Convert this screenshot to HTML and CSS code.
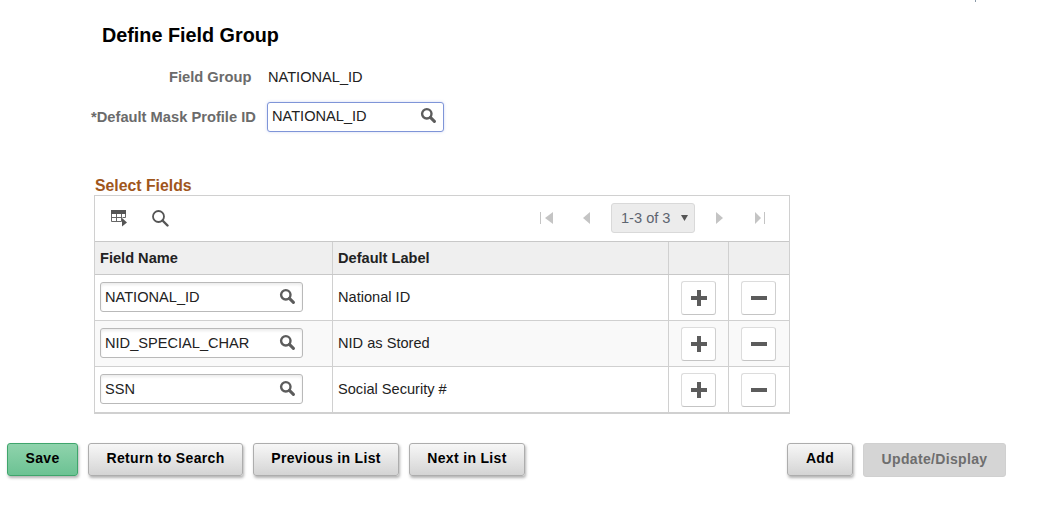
FILE: index.html
```html
<!DOCTYPE html>
<html lang="en">
<head>
<meta charset="utf-8">
<title>Define Field Group</title>
<link rel="stylesheet" href="styles.css">
</head>
<body>
<svg class="defs" width="0" height="0" aria-hidden="true">
  <symbol id="prompt" viewBox="0 0 16 16"><circle cx="6.8" cy="6.8" r="4.7" fill="none" stroke="currentColor" stroke-width="2.4"/><path d="M10.4 10.4 14.4 14.4" stroke="currentColor" stroke-width="3" stroke-linecap="round"/></symbol>
  <symbol id="plus" viewBox="0 0 16 16"><path d="M6 0h4v6h6v4h-6v6H6v-6H0V6h6z" fill="currentColor"/></symbol>
</svg>
<div class="tick"></div>
<main class="page">
  <h1 class="title">Define Field Group</h1>
  <div class="form-row row-static">
    <span class="label label-static">Field Group</span>
    <span class="value">NATIONAL_ID</span>
  </div>
  <div class="form-row row-input">
    <span class="label">*Default Mask Profile ID</span>
    <div class="field field-focus"><span>NATIONAL_ID</span><svg class="prompt"><use href="#prompt"/></svg></div>
  </div>
  <div class="grid-title">Select Fields</div>
  <section class="grid">
    <div class="toolbar">
      <svg class="tool-view" width="18" height="18" viewBox="0 0 18 18"><path d="M1 1h15v4H1z" fill="#555"/><path d="M1.500 5v7.500h10M1.500 8.500h10M6.500 5v7.500M11.500 5v7.500M15.500 5v3.500" fill="none" stroke="#666" stroke-width="1"/><path d="M12.500 8.500h3" stroke="#666" stroke-width="1"/><path d="M12 9l5 4.500-5 4z" fill="#555"/></svg>
      <svg class="tool-find" width="18" height="18" viewBox="0 0 18 18"><circle cx="7.500" cy="7.500" r="5.500" fill="none" stroke="#555" stroke-width="1.800"/><path d="M11.500 11.500 16.500 16.500" stroke="#555" stroke-width="2.400" stroke-linecap="round"/></svg>
      <div class="pager">
        <svg width="13" height="14" viewBox="0 0 13 14"><path d="M.5 1v12" stroke="#c4c4c4"/><path d="M13 1v12L5 7z" fill="#c4c4c4"/></svg>
        <svg class="pg-prev" width="8" height="14" viewBox="0 0 8 14"><path d="M7 1v12L0 7z" fill="#c4c4c4"/></svg>
        <div class="pager-select"><span>1-3 of 3</span><svg width="7" height="6" viewBox="0 0 7 6"><path d="M0 0h7L3.500 6z" fill="#555"/></svg></div>
        <svg class="pg-next" width="8" height="14" viewBox="0 0 8 14"><path d="M0 1v12l7-6z" fill="#c4c4c4"/></svg>
        <svg class="pg-last" width="12" height="14" viewBox="0 0 12 14"><path d="M0 1v12l6-6z" fill="#c4c4c4"/><path d="M9.500 1v12" stroke="#c4c4c4"/></svg>
      </div>
    </div>
    <div class="row head">
      <div class="cell c1">Field Name</div>
      <div class="cell c2">Default Label</div>
      <div class="cell c3"></div>
      <div class="cell c4"></div>
    </div>
    <div class="row first">
      <div class="cell c1"><div class="field field-row"><span>NATIONAL_ID</span><svg class="prompt"><use href="#prompt"/></svg></div></div>
      <div class="cell c2">National ID</div>
      <div class="cell c3"><div class="icon-btn"><svg width="16" height="16"><use href="#plus"/></svg></div></div>
      <div class="cell c4"><div class="icon-btn"><span class="minus"></span></div></div>
    </div>
    <div class="row alt">
      <div class="cell c1"><div class="field field-row"><span>NID_SPECIAL_CHAR</span><svg class="prompt"><use href="#prompt"/></svg></div></div>
      <div class="cell c2">NID as Stored</div>
      <div class="cell c3"><div class="icon-btn"><svg width="16" height="16"><use href="#plus"/></svg></div></div>
      <div class="cell c4"><div class="icon-btn"><span class="minus"></span></div></div>
    </div>
    <div class="row last">
      <div class="cell c1"><div class="field field-row"><span>SSN</span><svg class="prompt"><use href="#prompt"/></svg></div></div>
      <div class="cell c2">Social Security #</div>
      <div class="cell c3"><div class="icon-btn"><svg width="16" height="16"><use href="#plus"/></svg></div></div>
      <div class="cell c4"><div class="icon-btn"><span class="minus"></span></div></div>
    </div>
  </section>
  <footer class="actions">
    <div class="btn btn-save">Save</div>
    <div class="btn btn-return">Return to Search</div>
    <div class="btn btn-prev">Previous in List</div>
    <div class="btn btn-next">Next in List</div>
    <div class="spacer"></div>
    <div class="btn btn-add">Add</div>
    <div class="btn btn-update">Update/Display</div>
  </footer>
</main>
</body>
</html>
```
FILE: styles.css
```css
* { box-sizing: border-box; }
html, body { margin: 0; padding: 0; background: #fff; }
body { width: 1058px; height: 530px; overflow: hidden; position: relative; font-family: "Liberation Sans", Arial, sans-serif; font-size: 14.6px; color: #222; }
.defs { position: absolute; }
.tick { position: absolute; left: 975px; top: 0; width: 1px; height: 2px; background: #8a9aa8; }
.page { padding-top: 24px; }
.title { margin: 0 0 0 102px; font-size: 19.8px; line-height: 22px; font-weight: bold; color: #000; }
.form-row { display: flex; align-items: center; }
.row-static { margin-top: 21px; height: 20px; padding-left: 169px; }
.row-input { margin-top: 15px; height: 30px; padding-left: 91px; }
.label { font-size: 14.7px; font-weight: bold; color: #6b6b6b; white-space: nowrap; }
.label-static { width: 99px; }
.row-input .label { width: 176px; }
.value { color: #222; }
.field { display: flex; align-items: center; justify-content: space-between; height: 30px; background: #fff; border: 1px solid #b9b9b9; border-radius: 3px; box-shadow: inset 0 2px 3px rgba(0,0,0,.08); padding: 0 7px 0 4px; color: #222; }
.field-focus { width: 177px; padding-bottom: 2px; border-color: #7f95d8; box-shadow: 0 0 3px rgba(120,140,220,.35); }
.field-row { width: 203px; }
.prompt { width: 16px; height: 16px; color: #5c5c5c; margin-top: -2px; }
.grid-title { margin-top: 45px; margin-left: 95px; font-size: 15.8px; line-height: 18px; font-weight: bold; color: #a0561c; }
.grid { margin-left: 94px; width: 696px; border: 1px solid #d0d0d0; border-bottom-width: 2px; }
.toolbar { display: flex; align-items: center; height: 45px; padding: 0 0 2px 15px; }
.tool-find { margin-left: 23px; }
.pager { display: flex; align-items: center; margin-left: auto; margin-right: 22px; }
.pg-prev { margin-left: 30px; }
.pager-select { display: flex; align-items: center; justify-content: space-between; width: 84px; height: 30px; margin-left: 20px; padding: 0 6px 0 9px; background: #ececec; border: 1px solid #d9d9d9; border-radius: 3px; color: #5d6470; }
.pg-next { margin-left: 21px; }
.pg-last { margin-left: 31px; }
.row { display: flex; height: 46px; border-top: 1px solid #d0d0d0; }
.row.alt { background: #f9f9f9; }
.row.head { height: 34px; background: #efefef; font-weight: bold; border-top-color: #c8c8c8; border-bottom: 1px solid #c8c8c8; color: #222; }
.row.first { border-top: 0; height: 45px; }
.cell { display: flex; align-items: center; padding-left: 5px; }
.c1 { width: 237px; padding-bottom: 2px; }
.c2 { width: 336px; padding-bottom: 2px; border-left: 1px solid #d0d0d0; }
.row.head .c1, .row.head .c2 { padding-bottom: 0; }
.c3 { width: 60px; border-left: 1px solid #d0d0d0; padding: 1px 0 0 12px; }
.c4 { width: 60px; border-left: 1px solid #d0d0d0; padding: 1px 0 0 12px; }
.icon-btn { display: flex; align-items: center; justify-content: center; width: 35px; height: 34px; background: #fff; border: 1px solid #dcdcdc; border-bottom-color: #c4c4c4; border-right-color: #cfcfcf; border-radius: 3px; color: #5c5c5c; }
.minus { width: 16px; height: 4px; background: #5c5c5c; }
.actions { display: flex; margin-top: 29px; padding-left: 7px; width: 1006px; gap: 10px; }
.spacer { flex: 1; }
.btn { display: flex; align-items: center; justify-content: center; height: 33px; padding-bottom: 3px; font-size: 14px; font-weight: bold; letter-spacing: .33px; color: #000; border: 1px solid #adadad; border-radius: 3px; background: linear-gradient(#f7f7f7, #d4d4d4); box-shadow: 1px 2px 3px rgba(0,0,0,.3); }
.btn-save { width: 71px; border-color: #3fa56c; background: linear-gradient(#8fd3ac, #6cc293); }
.btn-return { width: 155px; }
.btn-prev { width: 146px; }
.btn-next { width: 116px; }
.btn-add { width: 66px; }
.btn-update { width: 143px; background: #d5d5d5; border-color: #d0d0d0; color: #6e6e6e; box-shadow: none; height: 34px; }
```
